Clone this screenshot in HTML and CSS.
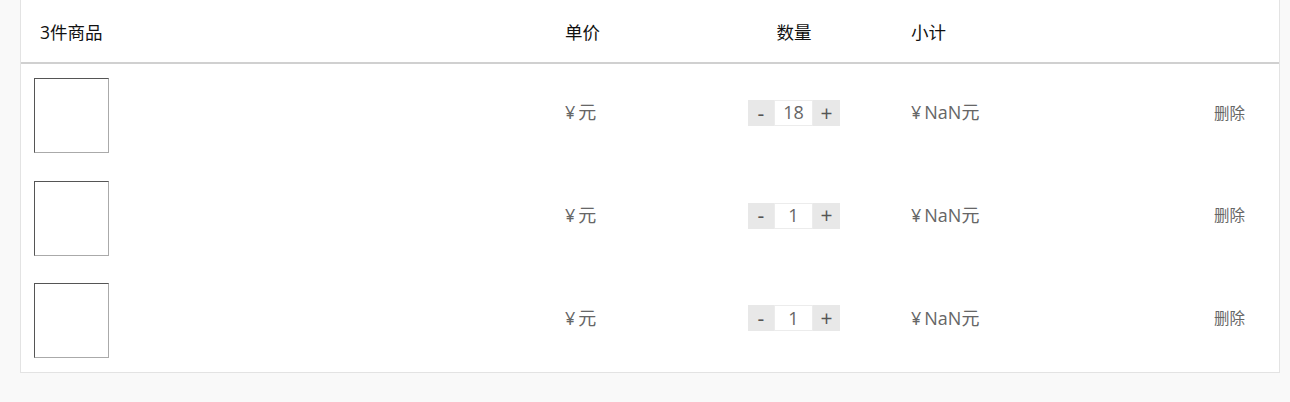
FILE: index.html
```html
<!DOCTYPE html>
<html lang="zh-CN">
<head>
<meta charset="utf-8">
<title>购物车</title>
<link rel="stylesheet" href="styles.css">
</head>
<body>
<div class="cart">
  <div class="head">
    <div class="c-prod">3件商品</div>
    <div class="c-price">单价</div>
    <div class="c-qty">数量</div>
    <div class="c-sub">小计</div>
    <div class="c-del"></div>
  </div>
  <div class="row">
    <div class="c-prod"><span class="pic"></span></div>
    <div class="c-price"><span class="cur">¥</span>元</div>
    <div class="c-qty"><div class="qty"><span class="btn">-</span><span class="num">18</span><span class="btn">+</span></div></div>
    <div class="c-sub"><span class="cur">¥</span>NaN元</div>
    <div class="c-del">删除</div>
  </div>
  <div class="row">
    <div class="c-prod"><span class="pic"></span></div>
    <div class="c-price"><span class="cur">¥</span>元</div>
    <div class="c-qty"><div class="qty"><span class="btn">-</span><span class="num">1</span><span class="btn">+</span></div></div>
    <div class="c-sub"><span class="cur">¥</span>NaN元</div>
    <div class="c-del">删除</div>
  </div>
  <div class="row">
    <div class="c-prod"><span class="pic"></span></div>
    <div class="c-price"><span class="cur">¥</span>元</div>
    <div class="c-qty"><div class="qty"><span class="btn">-</span><span class="num">1</span><span class="btn">+</span></div></div>
    <div class="c-sub"><span class="cur">¥</span>NaN元</div>
    <div class="c-del">删除</div>
  </div>
</div>
</body>
</html>
```
FILE: styles.css
```css
* { box-sizing: border-box; }
html, body { margin: 0; padding: 0; }
body {
  background: #f9f9f9;
  font-family: "Open Sans", "Noto Sans CJK SC", sans-serif;
  font-size: 18px;
  color: #666;
}
.cart {
  margin: 0 10px 0 20px;
  background: #fff;
  border: 1px solid #e3e3e3;
  border-top: 0;
}
.head, .row {
  display: grid;
  grid-template-columns: 544px 183px 92px 374px 1fr;
  align-items: center;
  line-height: 1.2;
}
.head {
  height: 64px;
  border-bottom: 2px solid #d0d0d0;
  color: #111;
  font-size: 17.5px;
}
.head > div { margin-top: 2px; }
.head .c-prod { padding-left: 19px; }
.row {
  padding: 14px 0 13.67px;
}
.row .c-prod { padding-left: 13px; display: flex; }
.c-qty { text-align: center; }
.c-sub { padding-left: 71px; }
.row .c-price, .row .c-qty, .row .c-sub, .row .c-del { margin-top: -5px; }
.cur { margin-right: 3px; }
.c-del { font-size: 15.5px; color: #666; }
.pic {
  display: block;
  width: 75px;
  height: 75px;
  border: 1px solid;
  border-color: #555 #aaa #aaa #555;
}
.qty {
  display: flex;
  height: 26px;
  width: 92px;
  background: #e8e8e8;
  align-items: stretch;
}
.btn {
  width: 26px;
  display: flex;
  align-items: center;
  justify-content: center;
  color: #555;
  font-size: 21px;
  line-height: 1;
}
.btn + .num + .btn { width: 27px; }
.num {
  width: 39px;
  background: #fff;
  border: 1px solid #ececec;
  display: flex;
  align-items: center;
  justify-content: center;
  color: #666;
  font-size: 18px;
}
```
